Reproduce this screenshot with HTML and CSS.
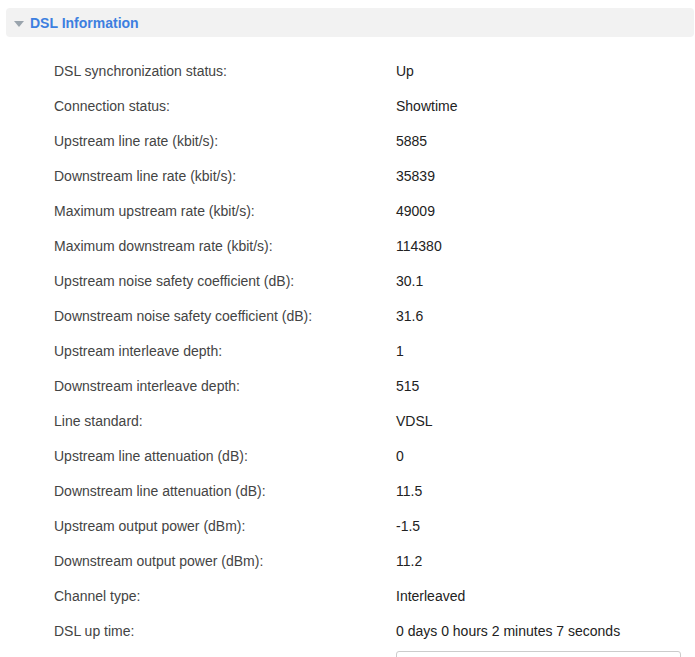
FILE: index.html
```html
<!DOCTYPE html>
<html lang="en">
<head>
    <meta charset="UTF-8">
    <title>DSL Information</title>
    <link rel="stylesheet" href="styles.css">
</head>
<body>
    <div class="panel">
        <div class="panel-head">
            <span class="arrow"></span>
            <span class="panel-title">DSL Information</span>
        </div>
        <div class="info">
            <div class="row"><span class="label">DSL synchronization status:</span><span class="value">Up</span></div>
            <div class="row"><span class="label">Connection status:</span><span class="value">Showtime</span></div>
            <div class="row"><span class="label">Upstream line rate (kbit/s):</span><span class="value">5885</span></div>
            <div class="row"><span class="label">Downstream line rate (kbit/s):</span><span class="value">35839</span></div>
            <div class="row"><span class="label">Maximum upstream rate (kbit/s):</span><span class="value">49009</span></div>
            <div class="row"><span class="label">Maximum downstream rate (kbit/s):</span><span class="value">114380</span></div>
            <div class="row"><span class="label">Upstream noise safety coefficient (dB):</span><span class="value">30.1</span></div>
            <div class="row"><span class="label">Downstream noise safety coefficient (dB):</span><span class="value">31.6</span></div>
            <div class="row"><span class="label">Upstream interleave depth:</span><span class="value">1</span></div>
            <div class="row"><span class="label">Downstream interleave depth:</span><span class="value">515</span></div>
            <div class="row"><span class="label">Line standard:</span><span class="value">VDSL</span></div>
            <div class="row"><span class="label">Upstream line attenuation (dB):</span><span class="value">0</span></div>
            <div class="row"><span class="label">Downstream line attenuation (dB):</span><span class="value">11.5</span></div>
            <div class="row"><span class="label">Upstream output power (dBm):</span><span class="value">-1.5</span></div>
            <div class="row"><span class="label">Downstream output power (dBm):</span><span class="value">11.2</span></div>
            <div class="row"><span class="label">Channel type:</span><span class="value">Interleaved</span></div>
            <div class="row"><span class="label">DSL up time:</span><span class="value">0 days 0 hours 2 minutes 7 seconds</span></div>
            <div class="row row-btn"><span class="label"></span><span class="value"><span class="btn"></span></span></div>
        </div>
    </div>
</body>
</html>
```

FILE: styles.css
```css
body {
    margin: 0;
    font-family: "Liberation Sans", Arial, sans-serif;
    font-size: 14px;
    background: #fff;
    overflow: hidden;
}
.panel {
    padding: 8px 1px 0 6px;
}
.panel-head {
    display: flex;
    align-items: center;
    height: 29px;
    background-color: #f2f2f2;
    border-radius: 4px;
    padding-left: 8px;
}
.arrow {
    width: 0;
    height: 0;
    border-left: 5px solid transparent;
    border-right: 5px solid transparent;
    border-top: 6px solid #9aa4ad;
    margin-right: 6px;
    margin-top: 3px;
}
.panel-title {
    font-size: 14px;
    font-weight: bold;
    color: #3d7fe0;
}
.info {
    padding-top: 16px;
}
.row {
    display: flex;
    align-items: center;
    height: 35px;
}
.label {
    width: 342px;
    padding-left: 48px;
    color: #444;
}
.value {
    color: #222;
}
.row-btn {
    align-items: flex-start;
    padding-top: 3px;
}
.btn {
    display: block;
    width: 283px;
    height: 30px;
    border: 1px solid #ccc;
    border-radius: 3px;
    background: #fff;
}
```
